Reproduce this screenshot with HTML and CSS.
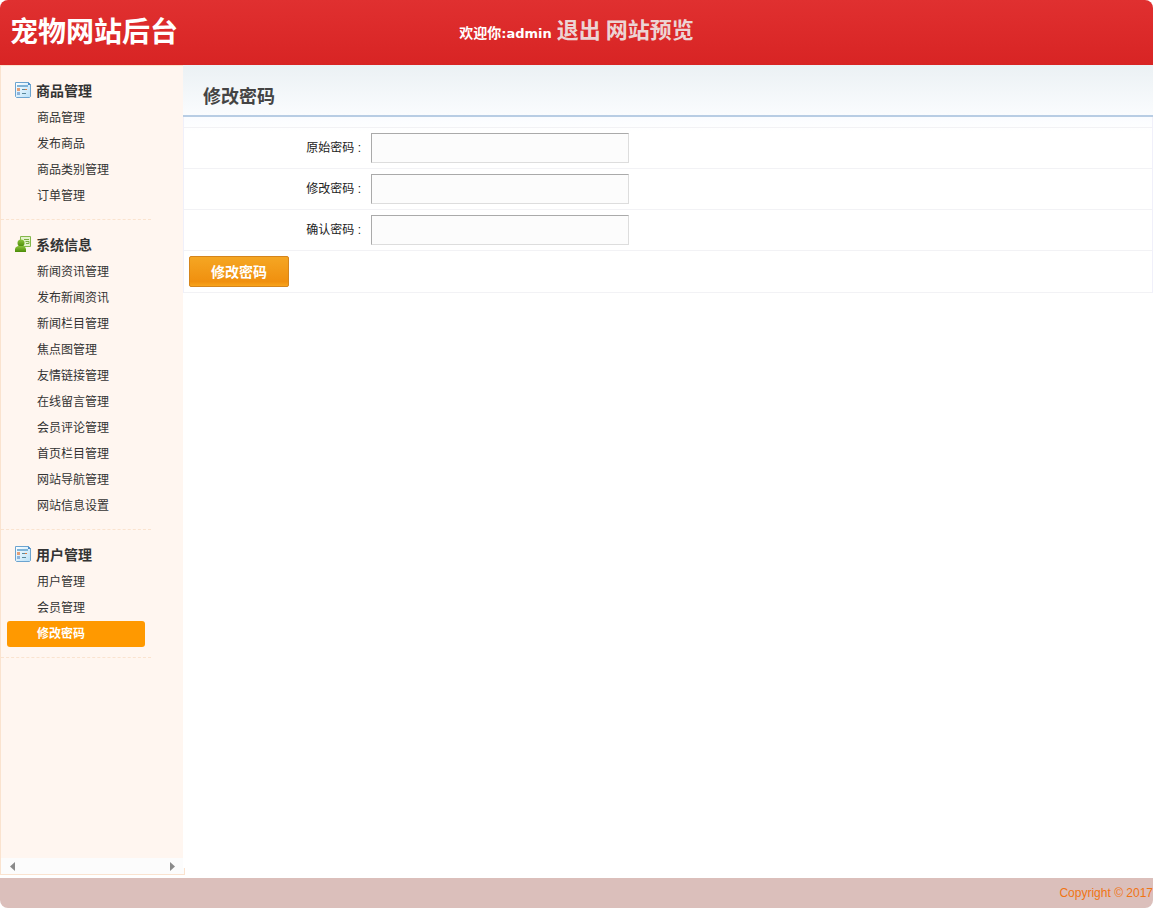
FILE: index.html
```html
<!DOCTYPE html>
<html lang="zh-CN">
  <head>
    <meta charset="utf-8" />
    <title>宠物网站后台</title>
    <link rel="stylesheet" href="styles.css">
  </head>
  <body>
    <!-- icons used in the menu -->
    <svg class="sprite" aria-hidden="true">
      <linearGradient id="sheet" x1="0" y1="0" x2="1" y2="1">
        <stop offset="0" stop-color="#ffffff" />
        <stop offset="1" stop-color="#b8e0f8" />
      </linearGradient>
      <linearGradient id="leaf" x1="0" y1="0" x2="0" y2="1">
        <stop offset="0" stop-color="#8cc43c" />
        <stop offset="1" stop-color="#4c8c08" />
      </linearGradient>
      <symbol id="icon-list" viewBox="0 0 17 17">
        <path d="M.5.5h13l2 2v12l-1 1h-13l-1-1z" fill="url(#sheet)" stroke="#6ca4d0" />
        <path d="M13 0v3h3z" fill="#4c8cc8" />
        <path d="M2 3h11v2h-11z" fill="#80b4d8" />
        <path d="M2 6h3v3h-3z" fill="#e4a078" />
        <path d="M2 10h3v3h-3z" fill="#8cb4dc" />
        <path d="M7 7h3v1h-3zM7 11h4v1h-4z" fill="#58889c" />
        <path d="M10 7h2v1h-2z" fill="#e07c40" />
      </symbol>
      <symbol id="icon-user" viewBox="0 0 17 17">
        <path d="M5.500.5h10v10h-10z" fill="#e4f2cc" stroke="#84b84c" />
        <path d="M9 3.500h5M10.500 5.500h3.500v2h-3" fill="none" stroke="#78ac40" />
        <circle cx="6" cy="7" r="3.500" fill="url(#leaf)" />
        <path d="M0 16v-3q0-2 3-3h5q3 1 3 3v3z" fill="url(#leaf)" />
      </symbol>
    </svg>

    <header class="header">
      <h1 class="logo">宠物网站后台</h1>
      <div class="welcome">
        <span class="user">欢迎你<span class="user-name">:admin</span></span>
        <a href="#">退出</a>
        <a href="#">网站预览</a>
      </div>
    </header>

    <div class="container">
      <div class="sidebar">
        <nav class="menu">
          <div class="menu-group">
            <h2><svg class="icon"><use href="#icon-list" /></svg>商品管理</h2>
            <ul>
              <li><a href="#">商品管理</a></li>
              <li><a href="#">发布商品</a></li>
              <li><a href="#">商品类别管理</a></li>
              <li><a href="#">订单管理</a></li>
            </ul>
          </div>
          <div class="menu-group">
            <h2><svg class="icon"><use href="#icon-user" /></svg>系统信息</h2>
            <ul>
              <li><a href="#">新闻资讯管理</a></li>
              <li><a href="#">发布新闻资讯</a></li>
              <li><a href="#">新闻栏目管理</a></li>
              <li><a href="#">焦点图管理</a></li>
              <li><a href="#">友情链接管理</a></li>
              <li><a href="#">在线留言管理</a></li>
              <li><a href="#">会员评论管理</a></li>
              <li><a href="#">首页栏目管理</a></li>
              <li><a href="#">网站导航管理</a></li>
              <li><a href="#">网站信息设置</a></li>
            </ul>
          </div>
          <div class="menu-group">
            <h2><svg class="icon"><use href="#icon-list" /></svg>用户管理</h2>
            <ul>
              <li><a href="#">用户管理</a></li>
              <li><a href="#">会员管理</a></li>
              <li><a href="#" class="active">修改密码</a></li>
            </ul>
          </div>
        </nav>
        <div class="scroll-bar">
          <button type="button" class="scroll-btn" aria-label="向左">
            <svg viewBox="0 0 5 9"><path d="M5 0v9l-5-4.500z" /></svg>
          </button>
          <button type="button" class="scroll-btn" aria-label="向右">
            <svg viewBox="0 0 5 9"><path d="M0 0v9l5-4.500z" /></svg>
          </button>
        </div>
      </div>

      <main class="main">
        <div class="title-bar">
          <h2>修改密码</h2>
        </div>
        <form class="form-box">
          <table class="form-table">
            <tr>
              <th><label for="old-pwd">原始密码 :</label></th>
              <td><input type="password" id="old-pwd" class="text-input" /></td>
            </tr>
            <tr>
              <th><label for="new-pwd">修改密码 :</label></th>
              <td><input type="password" id="new-pwd" class="text-input" /></td>
            </tr>
            <tr>
              <th><label for="confirm-pwd">确认密码 :</label></th>
              <td><input type="password" id="confirm-pwd" class="text-input" /></td>
            </tr>
            <tr>
              <td colspan="2"><button type="button" class="submit-btn">修改密码</button></td>
            </tr>
          </table>
        </form>
      </main>
    </div>

    <footer class="footer">Copyright © 2017</footer>
  </body>
</html>
```
FILE: styles.css
```css
* {
  box-sizing: border-box;
}

body {
  display: flex;
  flex-direction: column;
  min-height: 100vh;
  margin: 0;
  background-color: white;
  color: #333;
  font-family: "Liberation Sans", "Noto Sans CJK SC", sans-serif;
  font-size: 12px;
}

h1,
h2,
ul {
  margin: 0;
  padding: 0;
}

ul {
  list-style: none;
}

a {
  color: inherit;
  text-decoration: none;
}

.sprite {
  position: absolute;
  width: 0;
  height: 0;
}

/* header */
.header {
  display: grid;
  grid-template-columns: 1fr auto 1fr;
  align-items: center;
  height: 65px;
  padding: 0 10px;
  background: linear-gradient(#e03030, #d82424);
  border-radius: 8px 8px 0 0;
  color: white;
}

.logo {
  font-size: 28px;
  line-height: 60px;
}

.welcome {
  display: flex;
  align-items: baseline;
  gap: 5px;
  color: #ecd4d4;
  font-size: 22px;
  font-weight: bold;
  line-height: 60px;
}

.user {
  color: white;
  font-size: 14px;
}

.user-name {
  font-family: "DejaVu Sans", sans-serif;
  font-size: 13px;
}

/* left menu */
.container {
  display: flex;
  flex: 1;
}

.sidebar {
  display: flex;
  flex-direction: column;
  flex: none;
  width: 185px;
  margin-bottom: 3px;
  background-color: #fff6f0;
  border: 1px solid #fae3cf;
}

.menu {
  flex: 1;
}

.menu-group {
  width: 150px;
  padding: 10px 6px;
  border-bottom: 1px dashed #fae3cf;
}

.menu-group h2 {
  display: flex;
  align-items: center;
  gap: 4px;
  height: 28px;
  margin-bottom: 1px;
  padding-left: 8px;
  font-size: 14px;
}

.icon {
  width: 17px;
  height: 17px;
}

.menu-group a {
  display: block;
  height: 26px;
  padding-left: 30px;
  line-height: 26px;
}

.menu-group .active {
  background-color: #ff9900;
  border-radius: 3px;
  color: white;
  font-weight: bold;
}

.scroll-bar {
  display: flex;
  justify-content: space-between;
  height: 16px;
  padding: 0 9px;
  background-color: #fcfcfc;
}

.scroll-btn {
  display: flex;
  align-items: center;
  padding: 0;
  background: none;
  border: none;
}

.scroll-btn svg {
  width: 5px;
  height: 9px;
  fill: #8a8a8a;
}

/* content, covers the right edge of the menu */
.main {
  flex: 1;
  margin: 0 0 10px -2px;
  background-color: white;
}

.title-bar {
  padding: 0 20px;
  background: linear-gradient(#ebf1f4, #fafcfe);
  border-bottom: 2px solid #b8cde4;
}

.title-bar h2 {
  padding-top: 14px;
  color: #444;
  font-size: 18px;
  line-height: 36px;
}

.form-box {
  padding-top: 10px;
  background: linear-gradient(#fafcff, white 14px);
  border: solid #f0f0fa;
  border-width: 0 1px;
}

.form-table {
  width: 100%;
  border-collapse: collapse;
}

.form-table tr {
  border: solid #f2f2f5;
  border-width: 1px 0;
}

.form-table th,
.form-table td {
  padding: 5px;
  font-weight: normal;
  text-align: left;
}

.form-table th {
  width: 182px;
  padding-bottom: 8px;
  color: #222;
  text-align: right;
}

.text-input {
  display: block;
  width: 258px;
  height: 30px;
  padding: 4px;
  background-color: #fcfcfc;
  border: 1px solid;
  border-color: #aaa #ddd #ddd #aaa;
}

.submit-btn {
  display: block;
  width: 100px;
  height: 31px;
  padding: 0 0 2px;
  background: linear-gradient(#f5a623, #f0900f 85%, #f8a41c);
  border: 1px solid #d5851c;
  border-radius: 2px;
  color: white;
  font-family: inherit;
  font-size: 14px;
  font-weight: bold;
  cursor: pointer;
}

.footer {
  height: 30px;
  background-color: #dbbfbb;
  border-radius: 0 0 8px 8px;
  color: #f07414;
  line-height: 30px;
  text-align: right;
}
```
